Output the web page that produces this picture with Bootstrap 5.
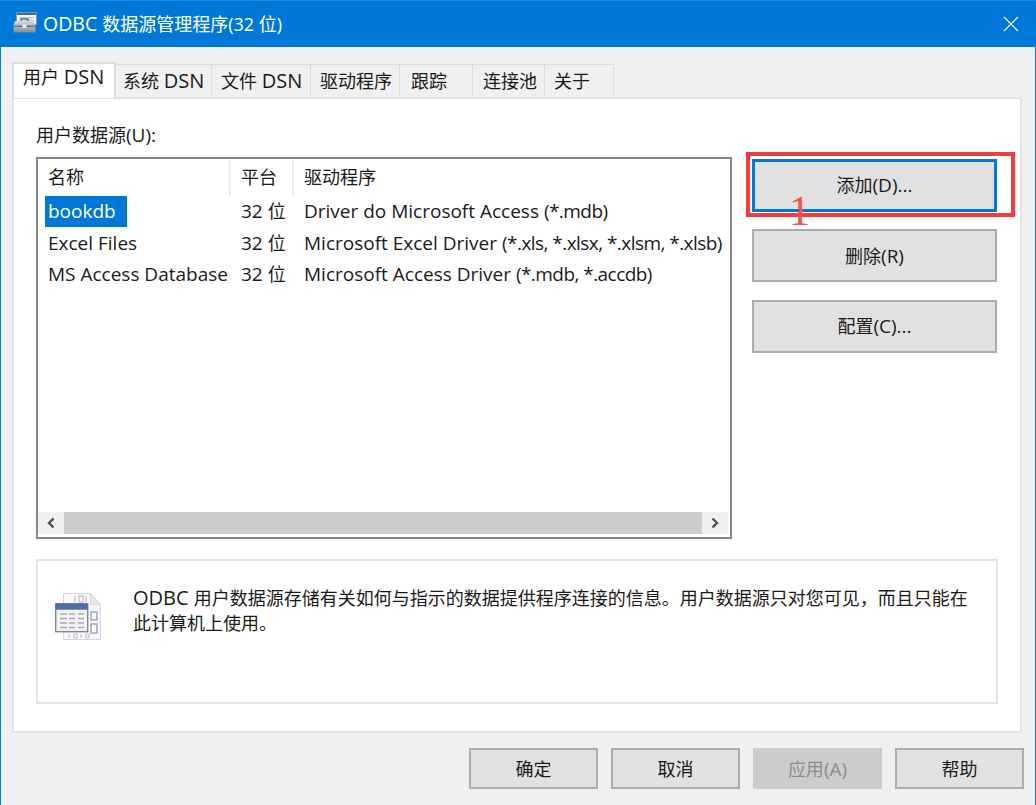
<!DOCTYPE html>
<html lang="zh">
<head>
<meta charset="utf-8">
<title>ODBC</title>
<link href="https://cdn.jsdelivr.net/npm/bootstrap@5.3.0/dist/css/bootstrap.min.css" rel="stylesheet">
<style>
html,body{height:805px;overflow:hidden;background:#f0f0f0}
body{font-family:"Open Sans","Noto Sans CJK SC",sans-serif;font-size:18px;line-height:24px;color:#1a1a1a}
.lt{font-size:19px}
.lt-big{font-size:20px}
.lt-ttl{font-size:19.500px}
.tight{letter-spacing:-.55px}
.win{width:1036px;height:805px;background:#f0f0f0;border-left:1px solid #0078d7;border-right:1px solid #0078d7;border-top:1px solid #2a8ade}
.tbar{height:46px;background:#0078d7;color:#fff;font-size:18px;padding-left:12px;padding-right:16px}
.tbar-ico{margin-bottom:3px}
.tbar-ttl{margin-left:6px}
.wbody{padding:14px 13px 0 11px}
.tabstrip{height:36px;align-items:flex-end;position:relative;z-index:1}
.dtab{height:33px;background:#f0f0f0;border:1px solid #dcdcdc;border-bottom:0;border-left:0;padding-left:7px;padding-top:4px;white-space:nowrap}
.dtab-on{height:36px;background:#fff;border-left:2px solid #dcdcdc;border-top:2px solid #dcdcdc;border-right:2px solid #dcdcdc;padding:1px 0 0 9px;margin-bottom:-1px}
.dtab-p9{padding-left:9px}
.dtab-p10{padding-left:10px}
.dtab-p11{padding-left:11px}
.panel{height:636px;background:#fff;border:2px solid #e3e3e3;padding:24px 22px 0 22px}
.lbl{height:34px}
.lv{width:696px;height:382px;border:2px solid #828790;background:#fff}
.lv-grid{display:grid;grid-template-columns:193px 63px 1fr;align-content:start;flex:1 1 auto;min-height:0;padding-top:1px}
.hc{height:36px;padding:5px 0 0 10px;border-right:2px solid #ececec}
.hc-last{border-right:0}
.rc{height:31.500px;line-height:31.500px;padding:0 0 0 10px;white-space:nowrap}
.rc-sel{padding-left:7px}
.sel{display:block;width:82px;background:#0078d7;color:#fff;padding-left:3px;height:31px}
.sb{height:22px;background:#f0f0f0;margin-bottom:3px;margin-right:2px}
.sb-btn{width:26px}
.sb-thumb{background:#cdcdcd;width:638px}
.sbtns{width:245px;margin-left:20px;padding-top:1.500px;gap:17.500px}
.wbtn{height:53px;background:#e1e1e1;border:2px solid #adadad;border-radius:0;color:#1a1a1a;font-size:18px;line-height:24px;padding:0}
.wbtn-foc{border:3px solid #0078d7}
.infobox{height:145px;margin-top:20px;border:2px solid #e3e3e3;padding:24px 20px 0 17px;width:962px}
.info-ico{margin-top:8px}
.infotxt{margin-left:32px;line-height:25px;width:838px}
.foot{padding-top:15px;margin-right:-2px;gap:13px}
.fbtn{width:129px;height:41px}
.fbtn-dis:disabled{background:#cccccc;border-color:#cccccc;color:#8c8c8c;opacity:1}
.annot-box{position:absolute;left:746px;top:152px;width:269px;height:65px;border:4px solid #f33b3b;pointer-events:none}
.annot-num{position:absolute;left:789px;top:189px;font-family:"Liberation Serif",serif;font-size:42px;line-height:44px;color:#f55050;font-weight:400}
</style>
</head>
<body>
<div class="win">
  <div class="tbar d-flex align-items-center">
    <svg class="tbar-ico" width="24" height="21" viewBox="0 0 24 21">
      <defs><linearGradient id="tb" x1="0" y1="0" x2="0" y2="1"><stop offset="0" stop-color="#d5dbe0"/><stop offset="1" stop-color="#7f8d99"/></linearGradient></defs>
      <rect x="3.500" y="0.500" width="20" height="12" fill="#f4f6f9" stroke="#7f93ad"/>
      <rect x="4" y="1" width="19" height="2" fill="#3d67a5"/>
      <path d="M6 5.500h15M6 8h15" stroke="#b6bfca"/>
      <path d="M8 9.500V7h7v2.500" fill="none" stroke="#5f6c78" stroke-width="1.400"/>
      <path d="M2 9h19l1.500 4v7.500H0.500V13z" fill="url(#tb)"/>
      <rect x="0.500" y="13.500" width="22" height="1.500" fill="#6c7883"/>
      <rect x="9.500" y="12.500" width="4" height="3.500" fill="#e6eaed"/>
    </svg>
    <span class="tbar-ttl flex-grow-1"><span class="lt-ttl">ODBC </span>数据源管理程序(32 位)</span>
    <svg width="16" height="16" viewBox="0 0 16 16"><path d="M1 1l14 14M15 1L1 15" stroke="#fff" stroke-width="1.100" fill="none"/></svg>
  </div>
  <div class="wbody">
    <div class="tabstrip d-flex">
      <div class="dtab dtab-on" style="width:104px">用户 <span class="lt-big">DSN</span></div>
      <div class="dtab" style="width:96px">系统 <span class="lt-big">DSN</span></div>
      <div class="dtab dtab-p9" style="width:99px">文件 <span class="lt-big">DSN</span></div>
      <div class="dtab dtab-p9" style="width:89px">驱动程序</div>
      <div class="dtab dtab-p11" style="width:73px">跟踪</div>
      <div class="dtab dtab-p10" style="width:72px">连接池</div>
      <div class="dtab dtab-p9" style="width:69px">关于</div>
    </div>
    <div class="panel">
      <div class="lbl">用户数据源<span class="lt">(U):</span></div>
      <div class="d-flex align-items-start">
        <div class="lv d-flex flex-column">
          <div class="lv-grid">
            <div class="hc">名称</div><div class="hc">平台</div><div class="hc hc-last">驱动程序</div>
            <div class="rc rc-sel"><span class="sel lt">bookdb</span></div><div class="rc"><span class="lt">32 </span>位</div><div class="rc lt">Driver do Microsoft Access <span class="tight">(*.mdb)</span></div>
            <div class="rc lt">Excel Files</div><div class="rc"><span class="lt">32 </span>位</div><div class="rc lt">Microsoft Excel Driver <span class="tight">(*.xls, *.xlsx, *.xlsm, *.xlsb)</span></div>
            <div class="rc lt">MS Access Database</div><div class="rc"><span class="lt">32 </span>位</div><div class="rc lt">Microsoft Access Driver <span class="tight">(*.mdb, *.accdb)</span></div>
          </div>
          <div class="sb d-flex">
            <div class="sb-btn d-flex align-items-center justify-content-center"><svg width="10" height="12" viewBox="0 0 10 12"><path d="M7.500 1.500L3 6l4.500 4.500" fill="none" stroke="#505050" stroke-width="2.400"/></svg></div>
            <div class="sb-thumb"></div>
            <div class="sb-btn flex-grow-1 d-flex align-items-center justify-content-center"><svg width="10" height="12" viewBox="0 0 10 12"><path d="M2.500 1.500L7 6l-4.500 4.500" fill="none" stroke="#505050" stroke-width="2.400"/></svg></div>
          </div>
        </div>
        <div class="sbtns d-flex flex-column">
          <button type="button" class="btn wbtn wbtn-foc">添加<span class="lt">(D)...</span></button>
          <button type="button" class="btn wbtn">删除<span class="lt">(R)</span></button>
          <button type="button" class="btn wbtn">配置<span class="lt">(C)...</span></button>
        </div>
      </div>
      <div class="infobox d-flex">
        <svg class="info-ico flex-shrink-0" width="46" height="47" viewBox="0 0 46 47">
          <path d="M8.500 0.500h27l10 11v35h-37z" fill="#f8f8fa" stroke="#d4d5da"/>
          <path d="M35.500 0.500v11h10z" fill="#e6e6ec" stroke="#d4d5da"/>
          <path d="M20 3v6M24 3h4v6h-4zM31 3v6" stroke="#c3c3d6" fill="none" stroke-width="1.400"/>
          <rect x="36" y="19" width="6" height="8" fill="none" stroke="#a3a3c2" stroke-width="1.500"/>
          <rect x="36" y="31" width="6" height="9" fill="none" stroke="#a3a3c2" stroke-width="1.500"/>
          <path d="M14 41v4M19 41h3v4h-3zM26 41v4M31 41h3v4h-3z" stroke="#c3c3d6" fill="none" stroke-width="1.200"/>
          <rect x="0.700" y="10.700" width="32" height="28" fill="#f2f2f2" stroke="#85858c" stroke-width="1.400"/>
          <rect x="0.700" y="10.700" width="32" height="6" fill="#4a6ea9"/>
          <path d="M5 21h7M14 21h6M23 21h6M5 25.500h7M14 25.500h6M23 25.500h6M5 30h7M14 30h6M23 30h6M5 34.500h7M14 34.500h6M23 34.500h6" stroke="#a9abb3" stroke-width="1.600"/>
        </svg>
        <div class="infotxt"><span class="lt-big">ODBC </span>用户数据源存储有关如何与指示的数据提供程序连接的信息。用户数据源只对您可见，而且只能在<br>此计算机上使用。</div>
      </div>
    </div>
    <div class="foot d-flex justify-content-end">
      <button type="button" class="btn wbtn fbtn">确定</button>
      <button type="button" class="btn wbtn fbtn">取消</button>
      <button type="button" class="btn wbtn fbtn fbtn-dis" disabled>应用<span class="lt">(A)</span></button>
      <button type="button" class="btn wbtn fbtn">帮助</button>
    </div>
  </div>
</div>
<div class="annot-box"></div>
<div class="annot-num">1</div>
</body>
</html>
